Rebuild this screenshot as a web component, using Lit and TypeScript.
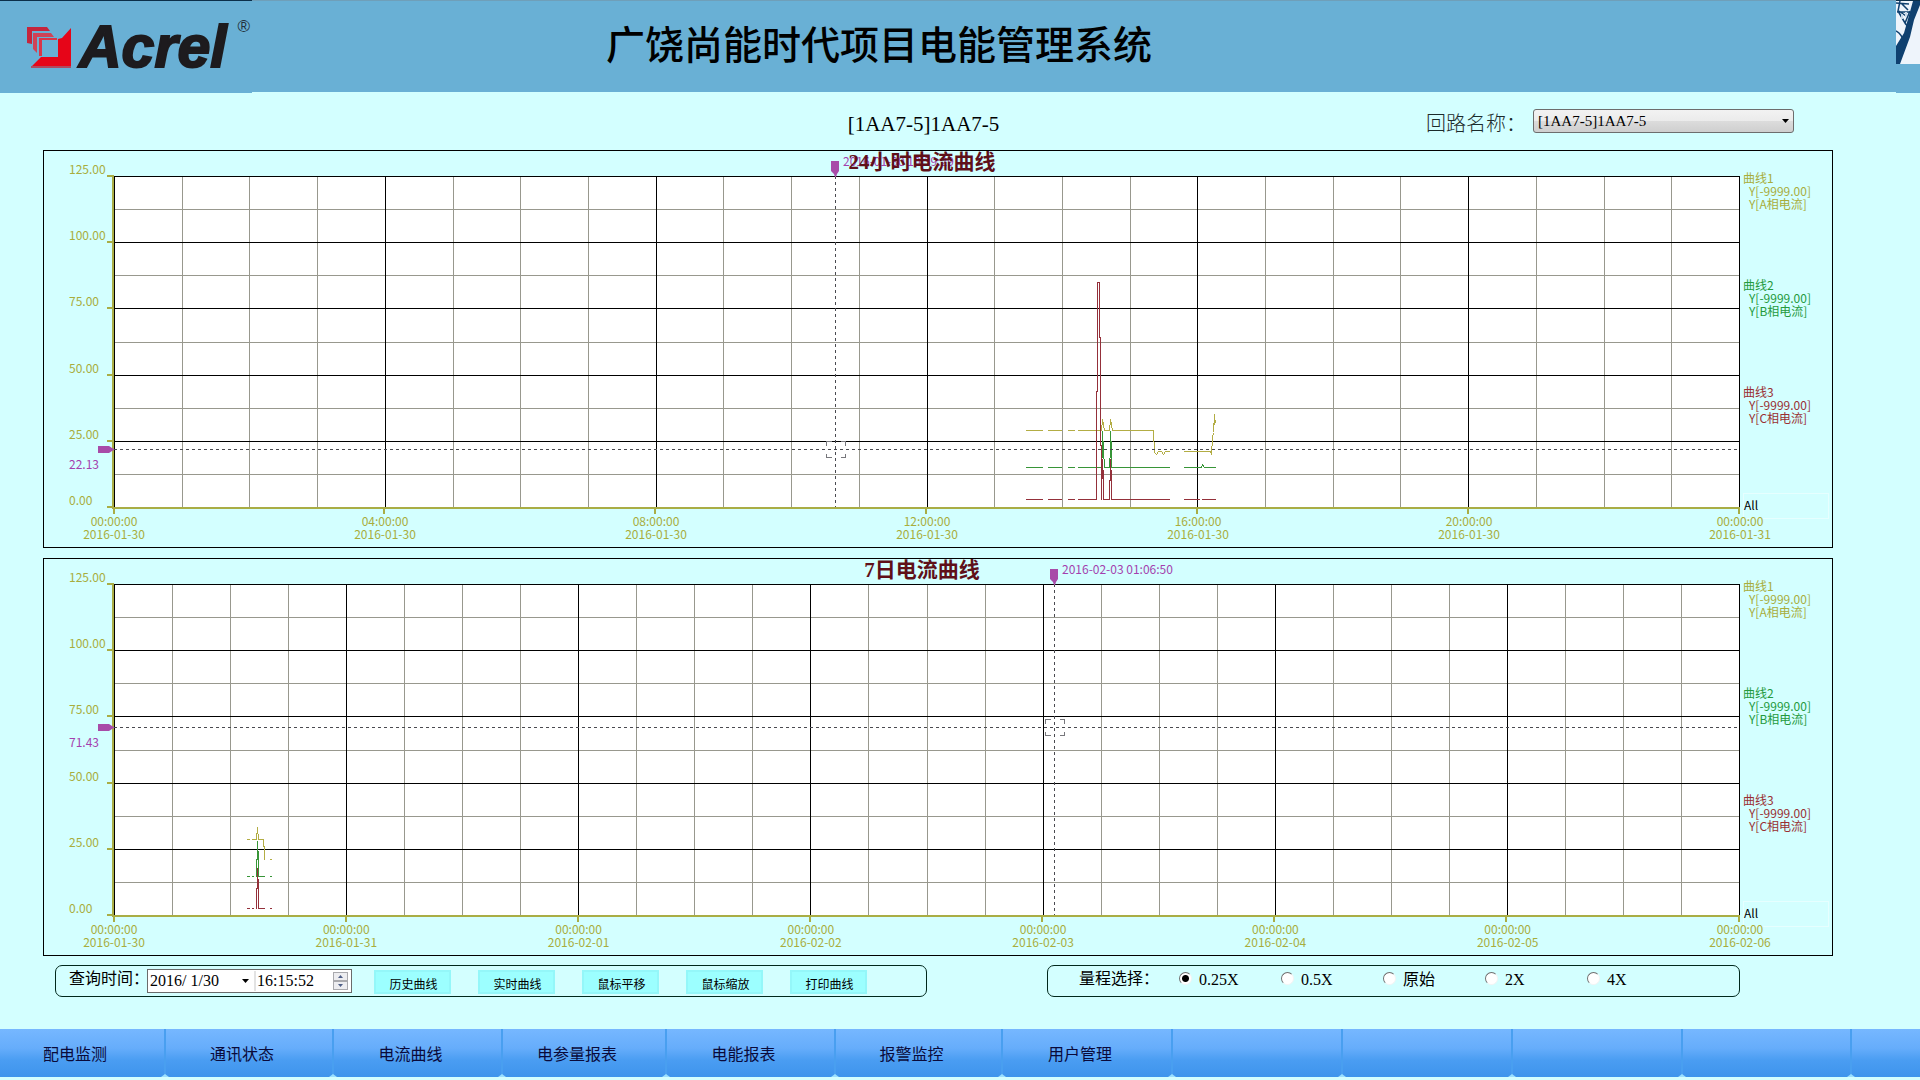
import { LitElement, html, svg, css } from "lit";
import { customElement, property, state } from "lit/decorators.js";

type Point = [number, number];

interface Trace {
  tone: string;
  runs: Point[][];
}

interface Tick {
  time: string;
  date: string;
}

interface ChartData {
  title: string;
  ticks: Tick[];
  traces: Trace[];
  cursorX: number;
  cursorY: number;
  cursorTime: string;
  cursorValue: string;
}

const PLOT_W = 1626;
const PLOT_H = 333;
const Y_LABELS = ["125.00", "100.00", "75.00", "50.00", "25.00", "0.00"];
const LEGEND = [
  { tone: "a", name: "曲线1", phase: "Y[A相电流]" },
  { tone: "b", name: "曲线2", phase: "Y[B相电流]" },
  { tone: "c", name: "曲线3", phase: "Y[C相电流]" },
];

const flat = (y: number, ...spans: Point[]): Point[][] =>
  spans.map(([from, to]) => [[from, y], [to, y]] as Point[]);

const DAY: ChartData = {
  title: "24小时电流曲线",
  ticks: [
    { time: "00:00:00", date: "2016-01-30" },
    { time: "04:00:00", date: "2016-01-30" },
    { time: "08:00:00", date: "2016-01-30" },
    { time: "12:00:00", date: "2016-01-30" },
    { time: "16:00:00", date: "2016-01-30" },
    { time: "20:00:00", date: "2016-01-30" },
    { time: "00:00:00", date: "2016-01-31" },
  ],
  traces: [
    {
      tone: "b",
      runs: [
        ...flat(291, [911, 928], [933, 947], [953, 960]),
        [[963, 291], [987, 291], [988, 273], [988, 255], [989, 273], [990, 291], [995, 291], [996, 273], [996, 255], [997, 273], [997, 291], [1055, 291]],
        [[1069, 291], [1087, 291], [1088, 288], [1090, 291], [1101, 291]],
      ],
    },
    {
      tone: "a",
      runs: [
        ...flat(254, [911, 928], [933, 947], [953, 960]),
        [[963, 254], [987, 254], [988, 243], [990, 254], [995, 254], [996, 243], [998, 254], [1039, 254], [1040, 276], [1042, 278], [1044, 275], [1047, 275], [1049, 278], [1051, 275], [1055, 275]],
        [[1069, 275], [1096, 275], [1097, 278], [1098, 262], [1099, 256], [1100, 238], [1100, 248], [1101, 244]],
      ],
    },
    {
      tone: "c",
      runs: [
        ...flat(323, [911, 928], [933, 947], [953, 960]),
        [[963, 323], [982, 323], [982, 215], [983, 215], [983, 106], [985, 106], [985, 161], [986, 161], [986, 269], [987, 269], [987, 323], [988, 283], [989, 304], [989, 323], [995, 323], [995, 304], [996, 304], [996, 283], [997, 304], [997, 323], [1055, 323]],
        ...flat(323, [1069, 1085], [1087, 1101]),
      ],
    },
  ],
  cursorX: 721,
  cursorY: 273,
  cursorTime: "2016-01-30 10:39:29",
  cursorValue: "22.13",
};

const WEEK: ChartData = {
  title: "7日电流曲线",
  ticks: [
    { time: "00:00:00", date: "2016-01-30" },
    { time: "00:00:00", date: "2016-01-31" },
    { time: "00:00:00", date: "2016-02-01" },
    { time: "00:00:00", date: "2016-02-02" },
    { time: "00:00:00", date: "2016-02-03" },
    { time: "00:00:00", date: "2016-02-04" },
    { time: "00:00:00", date: "2016-02-05" },
    { time: "00:00:00", date: "2016-02-06" },
  ],
  traces: [
    {
      tone: "b",
      runs: [
        ...flat(292, [132, 135], [137, 139], [155, 157]),
        [[141, 292], [142, 292], [142, 275], [143, 275], [143, 257], [144, 275], [144, 292], [150, 292]],
      ],
    },
    {
      tone: "a",
      runs: [
        ...flat(255, [132, 135]),
        [[137, 255], [142, 255], [143, 243], [144, 255], [149, 255], [149, 262], [150, 262], [150, 275]],
        ...flat(275, [155, 157]),
      ],
    },
    {
      tone: "c",
      runs: [
        ...flat(324, [132, 135], [137, 139], [155, 157]),
        [[141, 324], [142, 324], [142, 304], [143, 304], [143, 284], [144, 304], [144, 324], [150, 324]],
      ],
    },
  ],
  cursorX: 940,
  cursorY: 143,
  cursorTime: "2016-02-03 01:06:50",
  cursorValue: "71.43",
};

@customElement("trend-chart")
export class TrendChart extends LitElement {
  @property({ attribute: false }) data!: ChartData;

  static styles = css`
    :host {
      display: block;
      min-height: 390px;
    }
    .panel {
      box-sizing: border-box;
      height: 100%;
      border: 1px solid #000;
      display: grid;
      grid-template-columns: 70px minmax(0, 1fr) 92px;
      grid-template-rows: 25px minmax(0, 1fr) 38px;
      font: 12px/13px "Noto Sans CJK SC", sans-serif;
      color: #a8ad3c;
    }
    .title {
      grid-column: 1 / -1;
      grid-row: 1;
      margin: 0;
      padding-right: 32px;
      text-align: center;
      font: bold 21px/22px "Liberation Serif", "Noto Sans CJK SC", serif;
      color: #5f1019;
      z-index: 1;
    }
    .y-axis {
      grid-column: 1;
      grid-row: 2;
      display: flex;
      flex-direction: column;
      justify-content: space-between;
      margin: -14px 0 0 25px;
      padding-bottom: 3px;
    }
    .plot {
      grid-column: 2;
      grid-row: 2;
      position: relative;
    }
    .canvas {
      display: block;
      width: 100%;
      height: 100%;
      overflow: visible;
      position: absolute;
    }
    .canvas * {
      vector-effect: non-scaling-stroke;
    }
    .paper { fill: #fff; }
    .minor, .major, .cursor, .reticle, .trace { fill: none; stroke-width: 1; shape-rendering: crispEdges; }
    .minor { stroke: #98988e; }
    .major { stroke: #000; }
    .axis { fill: none; stroke: #a9ad45; stroke-width: 2; shape-rendering: crispEdges; }
    .cursor { stroke: #4a4a50; stroke-dasharray: 3 3; }
    .reticle { stroke: #77777c; }
    .flag { fill: #a84ba8; }
    .trace.a { stroke: #b3ad44; }
    .trace.b { stroke: #379537; }
    .trace.c { stroke: #94303a; }
    .stamp {
      position: absolute;
      white-space: nowrap;
      color: #a43fae;
    }
    .stamp.time { top: -22px; margin-left: 8px; }
    .stamp.value { left: -45px; margin-top: 8px; }
    .x-axis {
      grid-column: 2;
      grid-row: 3;
      display: flex;
      justify-content: space-between;
      margin: 5px -40px 0;
      text-align: center;
    }
    .tick { width: 80px; }
    .legend {
      grid-column: 3;
      grid-row: 2;
      display: flex;
      flex-direction: column;
      margin: -5px 0 -10px 3px;
      min-height: 0;
    }
    .entry { flex: 0 0 107px; white-space: nowrap; }
    .entry.c { flex-basis: 39px; }
    .entry.a { color: #a8ad3c; }
    .entry.b { color: #249a3c; }
    .entry.c { color: #9a2f32; }
    .reading { padding-left: 6px; }
    .all {
      margin-top: auto;
      height: 26px;
      line-height: 22px;
      margin-right: 3px;
      border: 1px solid #e6ffff;
      color: #000;
      box-sizing: border-box;
    }
  `;

  private grid() {
    const cells = (this.data.ticks.length - 1) * 4;
    const lines = [];
    for (let i = 1; i < 10; i += 2) {
      const y = Math.round((i * 331) / 10) + 0.5;
      lines.push(svg`<path class="minor" d="M0 ${y}H${PLOT_W}"/>`);
    }
    for (let i = 0; i <= cells; i += 1) {
      const x = Math.round((i * (PLOT_W - 1)) / cells) + 0.5;
      if (i % 4) lines.push(svg`<path class="minor" d="M${x} 0V${PLOT_H}"/>`);
    }
    for (let i = 0; i < 10; i += 2) {
      const y = Math.round((i * 331) / 10) + 0.5;
      lines.push(svg`<path class="major" d="M0 ${y}H${PLOT_W}"/>`);
    }
    for (let i = 0; i <= cells; i += 4) {
      const x = Math.round((i * (PLOT_W - 1)) / cells) + 0.5;
      lines.push(svg`<path class="major" d="M${x} 0V${PLOT_H}"/>`);
    }
    return lines;
  }

  private axes() {
    const count = this.data.ticks.length - 1;
    const ys = [0, 66, 132, 199, 265, 331].map((y) => `M-7 ${y}H-1`).join("");
    const xs = this.data.ticks
      .map((_, i) => `M${Math.floor((i * (PLOT_W - 1)) / count)} 333V338`)
      .join("");
    return svg`<path class="axis" d="M-1 -1V333M-2 332H${PLOT_W}${ys}${xs}"/>`;
  }

  private cursor() {
    const x = this.data.cursorX;
    const y = this.data.cursorY;
    const cx = x + 0.5;
    const cy = y + 0.5;
    return svg`
      <path class="cursor" d="M${cx} 0V331"/>
      <path class="cursor" d="M0 ${cy}H${PLOT_W}"/>
      <path class="reticle" d="M${cx - 9} ${cy - 4}v-4h5M${cx + 5} ${cy - 8}h5v4M${cx + 10} ${cy + 4}v4h-5M${cx - 4} ${cy + 8}h-5v-4"/>
      <path class="flag" d="M${x - 4} -15h8v10l-2 3l-1 3h-1l-1 -3l-3 -3z"/>
      <path class="flag" d="M-16 ${y - 3}h11l3 2l2 1v1l-2 1l-3 2h-11z"/>
    `;
  }

  render() {
    const d = this.data;
    return html`
      <section class="panel">
        <h2 class="title">${d.title}</h2>
        <div class="y-axis">${Y_LABELS.map((label) => html`<span>${label}</span>`)}</div>
        <div class="plot">
          <svg class="canvas" viewBox="0 0 ${PLOT_W} ${PLOT_H}" preserveAspectRatio="none" aria-hidden="true">
            <rect class="paper" width=${PLOT_W} height=${PLOT_H}></rect>
            ${this.grid()}
            ${d.traces.map((t) =>
              t.runs.map(
                (run) => svg`<polyline class="trace ${t.tone}" points=${run.map(([x, y]) => `${x + 0.5},${y + 0.5}`).join(" ")} />`
              )
            )}
            ${this.axes()} ${this.cursor()}
          </svg>
          <span class="stamp time" style="left:${(d.cursorX / PLOT_W) * 100}%">${d.cursorTime}</span>
          <span class="stamp value" style="top:${(d.cursorY / PLOT_H) * 100}%">${d.cursorValue}</span>
        </div>
        <div class="legend">
          ${LEGEND.map(
            (l) => html`<div class="entry ${l.tone}">
              <div>${l.name}</div>
              <div class="reading">Y[-9999.00]</div>
              <div class="reading">${l.phase}</div>
            </div>`
          )}
          <div class="all">All</div>
        </div>
        <div class="x-axis">
          ${d.ticks.map((t) => html`<div class="tick">${t.time}<br />${t.date}</div>`)}
        </div>
      </section>
    `;
  }
}

const NAV = ["配电监测", "通讯状态", "电流曲线", "电参量报表", "电能报表", "报警监控", "用户管理", "", "", "", "", ""];
const ACTIONS = ["历史曲线", "实时曲线", "鼠标平移", "鼠标缩放", "打印曲线"];
const RANGES = ["0.25X", "0.5X", "原始", "2X", "4X"];

@customElement("app-root")
export class AppRoot extends LitElement {
  @state() private range = "0.25X";

  static styles = css`
    :host {
      display: flex;
      flex-direction: column;
      box-sizing: border-box;
      min-height: 100vh;
      padding-bottom: 3px;
      background: #d3ffff;
      color: #000;
      font: 16px/20px "Liberation Serif", "Noto Sans CJK SC", serif;
    }
    .header {
      display: grid;
      grid-template-columns: 252px 1fr 24px;
      height: 92px;
      background: #69b0d5;
    }
    .brand, .photo {
      margin-bottom: -1px;
      background: #69b0d5;
      border-top: 1px solid #0b2f4a;
    }
    .brand {
      display: flex;
      align-items: flex-start;
      padding-left: 27px;
    }
    .mark {
      width: 45px;
      height: 41px;
      margin-top: 26px;
      flex: none;
    }
    .word {
      margin: 14px 0 0 7px;
      font: italic bold 59px/64px "Liberation Sans", sans-serif;
      color: #1d1b1e;
      -webkit-text-stroke: 2px #1d1b1e;
    }
    .reg {
      margin: 16px 0 0 11px;
      font: 17px/20px "Liberation Sans", sans-serif;
      color: #23313c;
    }
    .system {
      margin: 0;
      border-top: 1px solid #6f9fb9;
      padding: 9px 390px 0 0;
      text-align: center;
      font: 500 39px/64px "Noto Sans CJK SC", sans-serif;
    }
    .photo svg { display: block; width: 24px; height: 63px; }
    .toolbar {
      display: grid;
      grid-template-columns: 1fr auto 1fr;
      align-items: center;
      height: 58px;
      padding: 0 126px 0 53px;
    }
    .circuit {
      grid-column: 2;
      margin: 0;
      padding-top: 6px;
      font: 21px/24px "Liberation Serif", serif;
    }
    .picker {
      display: flex;
      justify-content: flex-end;
      align-items: center;
      gap: 7px;
    }
    .picker label {
      padding-top: 5px;
      font-size: 20px;
      line-height: 24px;
      font-weight: 300;
      color: #1c2b2b;
    }
    .select {
      display: grid;
      width: 261px;
      align-items: center;
    }
    .select select {
      grid-area: 1 / 1;
      appearance: none;
      width: 100%;
      height: 24px;
      padding: 0 4px;
      border: 1px solid #6d6d6d;
      border-radius: 3px;
      background: linear-gradient(#f2f2f2, #ebebeb 50%, #dcdcdc 50%, #cfcfcf);
      font: 15px/20px "Liberation Serif", serif;
      color: #000;
    }
    .arrow {
      width: 7px;
      height: 4px;
      background: #000;
      clip-path: polygon(0 0, 100% 0, 50% 100%);
    }
    .select .arrow {
      grid-area: 1 / 1;
      justify-self: end;
      margin-right: 5px;
      pointer-events: none;
    }
    .charts {
      flex: 1;
      display: grid;
      grid-template-rows: 1fr 1fr;
      gap: 10px;
      padding: 0 87px 0 43px;
    }
    .controls {
      display: grid;
      grid-template-columns: 872fr 693fr;
      gap: 120px;
      margin: 9px 180px 32px 55px;
    }
    .query, .scale {
      box-sizing: border-box;
      display: flex;
      height: 32px;
      margin: 0;
      border: 1px solid #00281c;
      border-radius: 7px;
      white-space: nowrap;
    }
    .query { padding-left: 13px; }
    .scale { padding-left: 31px; }
    .caption { line-height: 26px; width: 78px; flex: none; }
    .moment {
      box-sizing: border-box;
      display: flex;
      align-items: center;
      width: 205px;
      height: 24px;
      margin: 3px 22px 0 0;
      border: 1px solid #6b6b6b;
      background: #fff;
    }
    .moment input {
      border: 0;
      padding: 0;
      background: none;
      color: #000;
      font: 16px/20px "Liberation Serif", serif;
      box-sizing: border-box;
    }
    .moment .date { padding-left: 2px; width: 88px; }
    .drop {
      box-sizing: border-box;
      width: 20px;
      height: 20px;
      padding: 0 6px;
      border: 0;
      border-right: 2px solid #e3e3e3;
      background: none;
    }
    .drop .arrow { display: block; }
    .moment .clock { padding-left: 1px; width: 77px; }
    .spin { display: flex; flex-direction: column; width: 15px; }
    .spin button {
      display: flex;
      align-items: center;
      justify-content: center;
      width: 15px;
      height: 9px;
      padding: 0;
      border: 1px solid #a9a9ad;
      background: #ededf0;
    }
    .spin svg { width: 5px; height: 3px; fill: #4f5f87; }
    .actions { display: flex; gap: 27px; padding-top: 4px; }
    .actions button {
      width: 77px;
      height: 24px;
      padding: 4px 0 0 2px;
      border: 2px solid #94f7f9;
      background: #9cffff;
      color: #000;
      font: 12px/16px "Noto Sans CJK SC", sans-serif;
    }
    .scale .caption { width: 100px; }
    .options { display: flex; }
    .option {
      display: flex;
      gap: 7px;
      width: 102px;
      line-height: 28px;
    }
    .option input {
      appearance: none;
      box-sizing: border-box;
      width: 13px;
      height: 13px;
      margin: 6px 0 0;
      border: 1px solid;
      border-color: #6f6f6f #f4f4f4 #f4f4f4 #6f6f6f;
      border-radius: 50%;
      background: #fff;
    }
    .option input:checked { background: radial-gradient(circle, #000 3px, #fff 4px); }
    .nav {
      display: grid;
      grid-template-columns: 166fr 168fr 169fr 164fr 169fr 167fr 170fr 170fr 170fr 170fr 169fr 68fr;
      height: 48px;
      background: linear-gradient(#76b7ff, #66adfb 40%, #4a9df2 65%, #3e94ec);
    }
    .item {
      position: relative;
      box-sizing: border-box;
      padding: 3px 14px 0 0;
      border-right: 2px solid #499ff0;
      line-height: 45px;
      text-align: center;
      text-decoration: none;
      color: #0a0a3a;
    }
    .item:last-child { border-right: 0; }
    .item:not(:last-child)::after {
      content: "";
      position: absolute;
      right: -5px;
      bottom: 0;
      width: 8px;
      height: 3px;
      background: #9be0ff;
      clip-path: polygon(50% 0, 100% 100%, 0 100%);
    }
  `;

  render() {
    return html`
      <header class="header">
        <div class="brand">
          <svg class="mark" viewBox="0 0 45 41" aria-hidden="true">
            <path fill="#c5253c" d="M0 0H20L23 4H5V17L0 16Z" />
            <path fill="#cf4257" d="M6 6H24L27 10H10V26L6 22Z" />
            <path fill="#d93548" d="M12 11H30V13H15V29H12Z" />
            <path fill="#e60518" d="M44 1V40H4L14 30H31V12L35 11Z" />
            <path fill="#b04a60" d="M4 39H44V41H4Z" />
          </svg>
          <span class="word">Acrel</span><span class="reg">®</span>
        </div>
        <h1 class="system">广饶尚能时代项目电能管理系统</h1>
        <div class="photo">
          <svg viewBox="0 0 24 63" preserveAspectRatio="none" aria-hidden="true">
            <rect width="24" height="63" fill="#eef4fb" />
            <path fill="#0f406f" d="M17 0H24V4L18 19L14 36L4 63H0V45L8 32L12 18Z" />
            <path fill="none" stroke="#0f406f" stroke-width="1.5" d="M0 2L13 3M1 11H13M4 0L2 10L9 22L14 10M5 2L12 9M3 10L10 15M0 30Q6 33 8 42M9 22L12 26" />
            <path fill="#c9d9ea" d="M9 11H11V16H9ZM5 13H7V18H5Z" />
          </svg>
        </div>
      </header>

      <div class="toolbar">
        <h2 class="circuit">[1AA7-5]1AA7-5</h2>
        <div class="picker">
          <label for="circuit">回路名称：</label>
          <div class="select">
            <select id="circuit"><option>[1AA7-5]1AA7-5</option></select>
            <span class="arrow"></span>
          </div>
        </div>
      </div>

      <main class="charts">
        <trend-chart .data=${DAY}></trend-chart>
        <trend-chart .data=${WEEK}></trend-chart>
      </main>

      <div class="controls">
        <form class="query" @submit=${(e: Event) => e.preventDefault()}>
          <label class="caption" for="date">查询时间：</label>
          <div class="moment">
            <input id="date" class="date" type="text" value="2016/ 1/30" />
            <button class="drop" type="button" aria-label="选择日期"><span class="arrow"></span></button>
            <input class="clock" type="text" value="16:15:52" aria-label="时间" />
            <span class="spin">
              <button type="button" aria-label="增加"><svg viewBox="0 0 5 3"><path d="M0 3L2.5 0L5 3Z" /></svg></button>
              <button type="button" aria-label="减少"><svg viewBox="0 0 5 3"><path d="M0 0H5L2.5 3Z" /></svg></button>
            </span>
          </div>
          <div class="actions">${ACTIONS.map((a) => html`<button type="button">${a}</button>`)}</div>
        </form>
        <div class="scale" role="radiogroup" aria-labelledby="scale-caption">
          <span class="caption" id="scale-caption">量程选择：</span>
          <div class="options">
            ${RANGES.map(
              (r) => html`<label class="option">
                <input type="radio" name="range" .checked=${this.range === r} @change=${() => (this.range = r)} />${r}
              </label>`
            )}
          </div>
        </div>
      </div>

      <nav class="nav">
        ${NAV.map((n) => (n ? html`<a class="item" href="#">${n}</a>` : html`<span class="item"></span>`))}
      </nav>
    `;
  }
}
